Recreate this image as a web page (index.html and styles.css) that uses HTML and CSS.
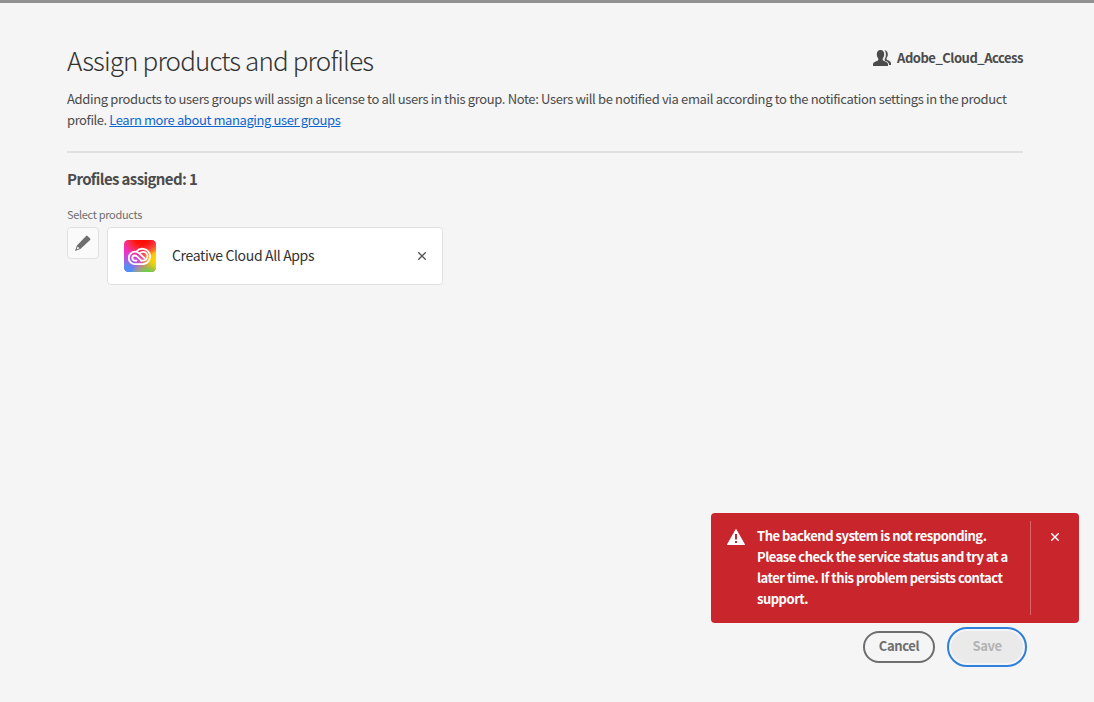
FILE: index.html
```html
<!DOCTYPE html>
<html lang="en">
<head>
<meta charset="utf-8">
<title>Assign products and profiles</title>
<link rel="stylesheet" href="styles.css">
</head>
<body>
<main class="page">
  <header class="header">
    <h1 class="title">Assign products and profiles</h1>
    <div class="group">
      <svg class="group-icon" width="18" height="16" viewBox="0 0 18 16"><path fill="#4b4b4b" d="M7.5 0C10 0 11.2 1.7 11.2 4.3c0 1.900-.7 3.300-1.500 4.300v1.100c0 .5.3.8.8 1 2.600.8 4.500 1.700 4.500 3.500V16H0v-1.800c0-1.800 1.900-2.700 4.500-3.500.5-.2.8-.5.8-1V8.600C4.500 7.600 3.800 6.200 3.800 4.300 3.800 1.700 5 0 7.500 0z"/><path fill="#4b4b4b" d="M11.400 .2c2.300 0 3.400 1.700 3.400 4 0 1.800-.6 3-1.300 3.900v1c0 .5.3.8.7 1 2 .8 3.800 1.600 3.800 3.300V15h-1.900c-.1-2.500-2-3.700-4.500-4.400V9.200c.8-1.200 1.300-2.800 1.300-4.800 0-1.900-.4-3.300-1.500-4.200z"/></svg>
      <span class="group-name">Adobe_Cloud_Access</span>
    </div>
  </header>
  <p class="desc"><span class="desc-first">Adding products to users groups will assign a license to all users in this group. Note: Users will be notified via email according to the notification settings in the product</span><br>profile. <a class="link" href="#">Learn more about managing user groups</a></p>
  <hr class="rule">
  <h2 class="subtitle">Profiles assigned: 1</h2>
  <div class="label">Select products</div>
  <div class="products">
    <button class="edit" aria-label="Edit">
      <svg width="18" height="18" viewBox="0 0 18 18"><path fill="#6e6e6e" fill-rule="evenodd" d="M12.100 1.900Q12.800 1.200 13.500 1.900L16.100 4.500Q16.800 5.200 16.100 5.900L6.400 15.100 1 17 2.900 11.600zM3.700 12.500 2.600 15.400 5.500 14.300z"/></svg>
    </button>
    <div class="card">
      <svg class="logo" width="32" height="32" viewBox="0 0 32 32">
        <defs>
          <clipPath id="tile"><rect width="32" height="32" rx="4.500"/></clipPath>
          <radialGradient id="g1" cx="18" cy="-3" r="21" gradientUnits="userSpaceOnUse"><stop offset="0" stop-color="#f00"/><stop offset=".4" stop-color="#fa160c"/><stop offset="1" stop-color="#ff3c00" stop-opacity="0"/></radialGradient>
          <radialGradient id="g2" cx="2" cy="34" r="24" gradientUnits="userSpaceOnUse"><stop offset="0" stop-color="#359af8"/><stop offset=".35" stop-color="#5f88f3"/><stop offset="1" stop-color="#b65fe8" stop-opacity="0"/></radialGradient>
          <radialGradient id="g3" cx="24" cy="37" r="18" gradientUnits="userSpaceOnUse"><stop offset="0" stop-color="#4cc94a"/><stop offset=".3" stop-color="#62d448"/><stop offset="1" stop-color="#c5e038" stop-opacity="0"/></radialGradient>
          <radialGradient id="g4" cx="34" cy="20" r="20" gradientUnits="userSpaceOnUse"><stop offset="0" stop-color="#ffe300"/><stop offset=".4" stop-color="#ffc400"/><stop offset="1" stop-color="#ff7a00" stop-opacity="0"/></radialGradient>
        </defs>
        <g clip-path="url(#tile)">
          <rect width="32" height="32" fill="#f02fc3"/>
          <rect width="32" height="32" fill="url(#g4)"/>
          <rect width="32" height="32" fill="url(#g1)"/>
          <rect width="32" height="32" fill="url(#g2)"/>
          <rect width="32" height="32" fill="url(#g3)"/>
        </g>
        <g fill="none" stroke="#fff" stroke-width="1.800" stroke-linecap="round">
          <path d="M12.500 11.500A7.700 7.700 0 1 1 19.300 24.100H11A6.200 6.200 0 0 1 11 11.700C13.500 11.700 14.700 12.800 16 14L20.500 18.200"/>
          <path d="M17.300 20.600 13.500 16.900C12.700 16.100 12.100 15.500 10.900 15.500A2.500 2.500 0 0 0 10.900 20.600H12.500"/>
          <path d="M15.600 13.500A4.400 4.400 0 1 1 19.300 20.600H17.300"/>
        </g>
      </svg>
      <span class="product">Creative Cloud All Apps</span>
      <svg class="remove" width="8" height="8" viewBox="0 0 8 8"><path d="M.3.3l7.400 7.400M7.700.3L.3 7.700" stroke="#555" stroke-width="1.400"/></svg>
    </div>
  </div>
</main>
<footer class="actions">
  <button class="btn cancel"><span>Cancel</span></button>
  <button class="btn save"><span>Save</span></button>
</footer>
<aside class="toast" role="alert">
  <svg class="warn" width="18" height="16" viewBox="0 0 18 16"><path fill="#fff" fill-rule="evenodd" d="M8.500.4Q9 -.3 9.500.4L17.900 15.300Q18 16 17.400 16H.6Q0 16 .1 15.300zM8 5v5.500h2V5zM8 12v2h2v-2z"/></svg>
  <p class="message">The backend system is not responding.<br>Please check the service status and try at a<br>later time. If this problem persists contact<br>support.</p>
  <div class="toast-close"><svg width="8" height="8" viewBox="0 0 8 8"><path d="M.3.3l7.400 7.400M7.700.3l-7.400 7.400" stroke="#fff" stroke-width="1.400"/></svg></div>
</aside>
</body>
</html>
```
FILE: styles.css
```css
* { box-sizing: border-box; margin: 0; padding: 0; }
body {
  width: 1094px;
  height: 702px;
  overflow: hidden;
  position: relative;
  display: flex;
  flex-direction: column;
  justify-content: space-between;
  background: #f5f5f5;
  border-top: 3px solid #929292;
  color: #4b4b4b;
  font-family: "Noto Sans CJK SC", "Open Sans", sans-serif;
  font-size: 13px;
  letter-spacing: -0.4px;
  white-space: nowrap;
}
button { font: inherit; letter-spacing: inherit; }
svg { display: block; flex-shrink: 0; }
.page { padding: 36px 71px 0 67px; }
.header { display: flex; justify-content: space-between; height: 49px; }
.title { font-size: 26px; font-weight: 300; line-height: 42px; letter-spacing: -0.86px; color: #323232; }
.group { display: flex; gap: 6px; height: 38px; align-items: center; }
.group-name { font-weight: 700; line-height: 20px; letter-spacing: -0.48px; }
.desc { line-height: 21px; letter-spacing: -0.42px; }
.desc-first { letter-spacing: -0.354px; }
.link { color: #0d66d0; text-decoration: underline; letter-spacing: -0.4px; }
.rule { border: 0; height: 2px; background: #e1e1e1; margin-top: 21px; }
.subtitle { margin-top: 15px; font-size: 15px; line-height: 22px; font-weight: 700; letter-spacing: -0.61px; }
.label { margin-top: 15px; font-size: 11px; line-height: 18px; letter-spacing: -0.32px; color: #6e6e6e; }
.products { display: flex; gap: 8px; margin-top: 4px; align-items: flex-start; }
.edit { width: 32px; height: 32px; display: flex; align-items: center; justify-content: center; border: 1px solid #e1e1e1; border-radius: 4px; background: #fafafa; }
.card { width: 336px; height: 58px; display: flex; align-items: center; padding: 0 16px; border: 1px solid #e1e1e1; border-radius: 4px; background: #fff; }
.product { flex: 1; margin-left: 16px; padding-bottom: 3px; font-size: 14px; letter-spacing: -0.36px; color: #323232; }
.actions { display: flex; justify-content: flex-end; align-items: center; gap: 12px; padding: 0 67px 35px 0; }
.btn { padding-bottom: 2px; font-weight: 700; line-height: 20px; border-radius: 20px; }
.cancel { width: 72px; height: 32px; border: 2px solid #6e6e6e; background: #f5f5f5; color: #6e6e6e; }
.save { width: 80px; height: 40px; border: 2px solid #2f80dc; background: #eaeaea; box-shadow: inset 0 0 0 2px #f5f5f5; color: #b3b3b3; }
.toast { position: absolute; left: 711px; top: 510px; width: 368px; height: 110px; display: flex; padding: 8px 0 8px 16px; border-radius: 4px; background: #c9252d; color: #fff; }
.warn { margin-top: 8px; }
.message { flex: 1; padding: 4px 0 0 12px; font-weight: 700; line-height: 21px; letter-spacing: -0.49px; }
.toast-close { width: 49px; border-left: 1px solid #db656b; padding: 12px 0 0 20px; }
```
